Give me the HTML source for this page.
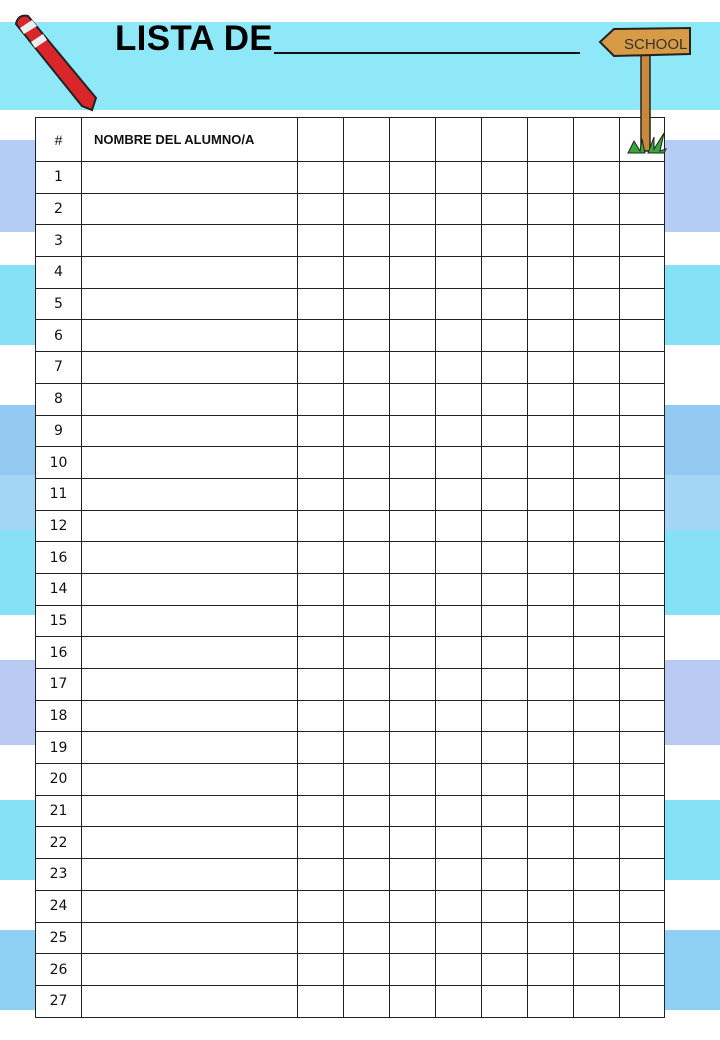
<!DOCTYPE html>
<html><head><meta charset="utf-8"><style>
html,body{margin:0;padding:0}
body{width:720px;height:1040px;position:relative;overflow:hidden;background:#fff;font-family:"Liberation Sans",sans-serif}
.s{position:absolute;left:-10px;width:740px;border-radius:6px}
table{position:absolute;left:35px;top:117px;border-collapse:collapse;background:#fff;table-layout:fixed}
td{border:1.3px solid #222;padding:0;font-family:"DejaVu Sans",sans-serif;font-size:14px;text-align:center;color:#111}
tr{height:31.7px}
tr.h{height:44px}
tr.h td{font-family:"Liberation Sans",sans-serif}
.title{position:absolute;left:115px;top:19px;font-weight:bold;font-size:35px;letter-spacing:0.3px}
.line{position:absolute;left:274px;top:52px;width:306px;height:2px;background:#111}
</style></head><body>
<div class="s" style="top:22px;height:88px;background:#8ee8f8"></div>
<div class="s" style="top:140px;height:92px;background:#b4cdf4"></div>
<div class="s" style="top:265px;height:80px;background:#86e0f6"></div>
<div class="s" style="top:405px;height:70px;background:#93c8f2"></div>
<div class="s" style="top:475px;height:55px;background:#a5d5f5"></div>
<div class="s" style="top:530px;height:85px;background:#86e0f6"></div>
<div class="s" style="top:660px;height:85px;background:#b8c9f2"></div>
<div class="s" style="top:800px;height:80px;background:#86e0f6"></div>
<div class="s" style="top:930px;height:80px;background:#8fcff4"></div>
<div class="title">LISTA DE</div><div class="line"></div>
<svg style="position:absolute;left:10px;top:10px" width="90" height="105" viewBox="0 0 90 105">
<path d="M6 14 Q8 4 18 6 L86 88 L82 100 L72 96 Z" fill="#d9262b" stroke="#222" stroke-width="2"/>
<path d="M10 18 L22 10 L27 16 L14 24 Z M21 32 L33 24 L37 30 L25 38 Z" fill="#eee"/>
</svg>
<table>
<colgroup><col style="width:46px"><col style="width:216px"><col style="width:46px"><col style="width:46px"><col style="width:46px"><col style="width:46px"><col style="width:46px"><col style="width:46px"><col style="width:46px"><col style="width:45px"></colgroup>
<tr class="h"><td>#</td><td style="text-align:left;padding-left:12px;font-weight:bold;font-size:13px">NOMBRE DEL ALUMNO/A</td><td></td><td></td><td></td><td></td><td></td><td></td><td></td><td></td></tr>
<tr><td>1</td><td></td><td></td><td></td><td></td><td></td><td></td><td></td><td></td><td></td></tr>
<tr><td>2</td><td></td><td></td><td></td><td></td><td></td><td></td><td></td><td></td><td></td></tr>
<tr><td>3</td><td></td><td></td><td></td><td></td><td></td><td></td><td></td><td></td><td></td></tr>
<tr><td>4</td><td></td><td></td><td></td><td></td><td></td><td></td><td></td><td></td><td></td></tr>
<tr><td>5</td><td></td><td></td><td></td><td></td><td></td><td></td><td></td><td></td><td></td></tr>
<tr><td>6</td><td></td><td></td><td></td><td></td><td></td><td></td><td></td><td></td><td></td></tr>
<tr><td>7</td><td></td><td></td><td></td><td></td><td></td><td></td><td></td><td></td><td></td></tr>
<tr><td>8</td><td></td><td></td><td></td><td></td><td></td><td></td><td></td><td></td><td></td></tr>
<tr><td>9</td><td></td><td></td><td></td><td></td><td></td><td></td><td></td><td></td><td></td></tr>
<tr><td>10</td><td></td><td></td><td></td><td></td><td></td><td></td><td></td><td></td><td></td></tr>
<tr><td>11</td><td></td><td></td><td></td><td></td><td></td><td></td><td></td><td></td><td></td></tr>
<tr><td>12</td><td></td><td></td><td></td><td></td><td></td><td></td><td></td><td></td><td></td></tr>
<tr><td>16</td><td></td><td></td><td></td><td></td><td></td><td></td><td></td><td></td><td></td></tr>
<tr><td>14</td><td></td><td></td><td></td><td></td><td></td><td></td><td></td><td></td><td></td></tr>
<tr><td>15</td><td></td><td></td><td></td><td></td><td></td><td></td><td></td><td></td><td></td></tr>
<tr><td>16</td><td></td><td></td><td></td><td></td><td></td><td></td><td></td><td></td><td></td></tr>
<tr><td>17</td><td></td><td></td><td></td><td></td><td></td><td></td><td></td><td></td><td></td></tr>
<tr><td>18</td><td></td><td></td><td></td><td></td><td></td><td></td><td></td><td></td><td></td></tr>
<tr><td>19</td><td></td><td></td><td></td><td></td><td></td><td></td><td></td><td></td><td></td></tr>
<tr><td>20</td><td></td><td></td><td></td><td></td><td></td><td></td><td></td><td></td><td></td></tr>
<tr><td>21</td><td></td><td></td><td></td><td></td><td></td><td></td><td></td><td></td><td></td></tr>
<tr><td>22</td><td></td><td></td><td></td><td></td><td></td><td></td><td></td><td></td><td></td></tr>
<tr><td>23</td><td></td><td></td><td></td><td></td><td></td><td></td><td></td><td></td><td></td></tr>
<tr><td>24</td><td></td><td></td><td></td><td></td><td></td><td></td><td></td><td></td><td></td></tr>
<tr><td>25</td><td></td><td></td><td></td><td></td><td></td><td></td><td></td><td></td><td></td></tr>
<tr><td>26</td><td></td><td></td><td></td><td></td><td></td><td></td><td></td><td></td><td></td></tr>
<tr><td>27</td><td></td><td></td><td></td><td></td><td></td><td></td><td></td><td></td><td></td></tr>
</table>
<svg style="position:absolute;left:598px;top:25px" width="95" height="132" viewBox="0 0 95 132">
<rect x="43" y="28" width="9" height="98" fill="#c88a3a" stroke="#222" stroke-width="1.5"/>
<path d="M2 17 L16 4 L92 3 L92 29 L16 31 Z" fill="#d79a45" stroke="#222" stroke-width="2"/>
<text x="26" y="24" font-family="Liberation Sans" font-size="15" fill="#333">SCHOOL</text>
<path d="M30 128 L36 116 L42 126 L44 114 L47 128 Z M50 128 L56 112 L56 124 L66 108 L62 126 L68 124 L66 128 Z" fill="#3aa53a" stroke="#222" stroke-width="1"/>
</svg>
</body></html>
